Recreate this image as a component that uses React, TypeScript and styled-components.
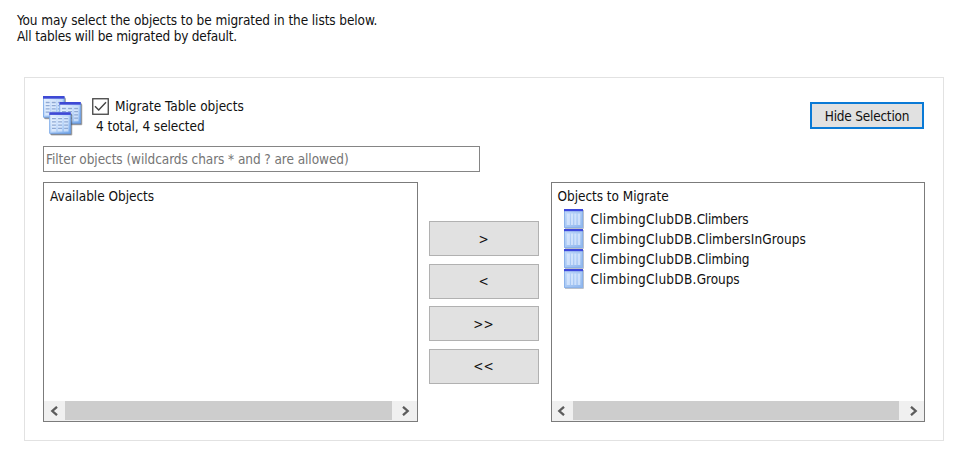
import React from 'react';
import styled, { createGlobalStyle } from 'styled-components';

const GlobalStyle = createGlobalStyle`
  *, *::before, *::after { box-sizing: border-box; }
  body { margin: 0; background: #fff; }
`;

const Page = styled.main`
  width: 977px;
  height: 455px;
  padding: 12px 33px 0 17px;
  overflow: hidden;
  color: #111;
  background: #fff;
  font: 13.5px/16px 'DejaVu Sans Condensed', 'DejaVu Sans', Tahoma, sans-serif;
  font-stretch: condensed;
`;

const Label = styled.span<{ $spacing?: number }>`
  white-space: pre;
  letter-spacing: ${p => p.$spacing ?? 0}px;
`;

const Intro = styled.header`
  display: flex;
  flex-direction: column;
  align-items: flex-start;
  height: 65px;
`;

const Panel = styled.section`
  width: 920px;
  height: 364px;
  margin-left: 7px;
  padding: 18px 18px 0;
  border: 1px solid #e2e2e2;
`;

const PanelHeader = styled.div`
  display: flex;
  align-items: flex-start;
  height: 50px;
`;

const Summary = styled.div`
  display: flex;
  flex-direction: column;
  align-items: flex-start;
  flex: 1;
  padding-left: 8px;
`;

const CheckRow = styled.label`
  display: flex;
  align-items: center;
  gap: 6px;
  height: 20px;
`;

const Totals = styled.div`
  display: flex;
  align-items: center;
  height: 20px;
  padding-left: 4px;
`;

const HideButton = styled.button`
  width: 114px;
  height: 27px;
  margin: 6px 1px 0 0;
  padding: 1px 0 0;
  border: 2px solid #0a7ad6;
  background: #e1e1e1;
  color: inherit;
  font: inherit;
`;

const Filter = styled.div`
  display: flex;
  align-items: center;
  width: 437px;
  height: 26px;
  padding: 0 2px 1px;
  border: 1px solid #858585;
  color: #757575;
`;

const Columns = styled.div`
  display: flex;
  margin-top: 10px;
`;

const ListBox = styled.div`
  display: flex;
  flex-direction: column;
  width: 375px;
  height: 240px;
  border: 1px solid #7b7b7b;
`;

const ListTitle = styled.div`
  height: 26px;
  padding: 5px 0 0 6px;
`;

const Items = styled.ul`
  flex: 1;
  margin: 0;
  padding: 0 0 0 12px;
  list-style: none;
`;

const Item = styled.li`
  display: flex;
  align-items: center;
  gap: 7px;
  height: 20px;
`;

const Scrollbar = styled.div`
  display: flex;
  height: 20px;
  padding-bottom: 1px;
  background: #f0f0f0;
`;

const ScrollArrow = styled.span<{ $end?: boolean }>`
  display: flex;
  align-items: center;
  justify-content: center;
  width: ${p => (p.$end ? 25 : 21)}px;
  padding-left: ${p => (p.$end ? 4 : 0)}px;
  padding-right: ${p => (p.$end ? 0 : 2)}px;
`;

const Thumb = styled.span`
  flex: 1;
  background: #cdcdcd;
`;

const Movers = styled.div`
  display: flex;
  flex-direction: column;
  gap: 7.5px;
  width: 133px;
  padding: 39px 12px 0 11px;
`;

const MoveButton = styled.button`
  width: 110px;
  height: 35px;
  padding: 0;
  border: 1px solid #b1b1b1;
  background: #e1e1e1;
  color: inherit;
  font: inherit;
`;

const Check = () => (
  <svg width="17" height="17" viewBox="0 0 17 17">
    <rect x=".75" y=".75" width="15.5" height="15.5" fill="#fff" stroke="#444" strokeWidth="1.3" />
    <path d="M3 8.2 6.7 12 14 4.3" fill="none" stroke="#444" strokeWidth="1.4" />
  </svg>
);

const Chevron = ({ right }: { right?: boolean }) => (
  <svg width="8" height="10" viewBox="0 0 8 10">
    <path d={right ? 'M1 .8 5.7 5 1 9.2' : 'M7 .8 2.3 5 7 9.2'} fill="none" stroke="#5c5c5c" strokeWidth="2.3" />
  </svg>
);

const Sheet = ({ x, y }: { x: number; y: number }) => (
  <g transform={`translate(${x} ${y})`}>
    <rect x="1.5" y="2" width="21.5" height="21.3" rx="1" fill="#555" opacity=".45" />
    <rect x="1" y="1" width="21.1" height="21.4" fill="#3c4c66" opacity=".65" />
    <rect width="21.5" height="21.5" fill="url(#sheet)" />
    <path d="M.4 2v19.1h20.7V2" fill="none" stroke="#6fa0e4" strokeWidth=".8" />
    <path d="M2.2 4.5h4.8v14.7H2.2zM8.3 4.5h4.8v14.7H8.3zM14.4 4.5h4.8v14.7h-4.8z" fill="#eef5ff" opacity=".6" />
    <path d="M2.7 6.5h3.9m2.2 0h3.9m2.2 0h3.9M2.7 9.7h3.9m2.2 0h3.9m2.2 0h3.9M2.7 12.9h3.9m2.2 0h3.9m2.2 0h3.9M2.7 16.1h3.9m2.2 0h3.9m2.2 0h3.9" stroke="#8fa9d3" strokeWidth="1.3" />
    <rect width="21.5" height="2.7" fill="#3e49d5" />
  </g>
);

const TablesIcon = () => (
  <svg width="41" height="40" viewBox="0 0 41 40">
    <defs>
      <linearGradient id="sheet" x1="0" y1="0" x2="1" y2="1">
        <stop offset="0" stopColor="#edf5ff" />
        <stop offset=".5" stopColor="#bcd7fa" />
        <stop offset="1" stopColor="#6fa5ea" />
      </linearGradient>
    </defs>
    <Sheet x={0} y={0} />
    <Sheet x={16.3} y={6} />
    <Sheet x={6.3} y={16.2} />
  </svg>
);

const TableIcon = () => (
  <svg width="20" height="20" viewBox="0 0 20 20">
    <defs>
      <linearGradient id="table" x1="0" y1="0" x2="1" y2="1">
        <stop offset="0" stopColor="#c3dafa" />
        <stop offset="1" stopColor="#8db6ee" />
      </linearGradient>
    </defs>
    <path d="M1 1h18.7v18.7H1z" fill="#9da7b7" />
    <path d="M0 0h19v19H0z" fill="url(#table)" />
    <path d="M2.7 4.5h3.2v11.5H2.7zM7 4.5h2.2v11.5H7zM10.3 4.5h2.2v11.5h-2.2zM13.6 4.5h2.7v11.5h-2.7z" fill="#dfecff" opacity=".7" />
    <path d="M.5 2v16.5h18V2" fill="none" stroke="#8bb2ea" />
    <path d="M0 0h19v2.2H0z" fill="#3c48dc" />
  </svg>
);

const HScroll = () => (
  <Scrollbar>
    <ScrollArrow><Chevron /></ScrollArrow>
    <Thumb />
    <ScrollArrow $end><Chevron right /></ScrollArrow>
  </Scrollbar>
);

const schema = 'ClimbingClubDB.';
const tables = [
  { name: 'Climbers', spacing: -0.25 },
  { name: 'ClimbersInGroups', spacing: 0.07 },
  { name: 'Climbing', spacing: -0.1 },
  { name: 'Groups', spacing: -0.05 },
];

export default function App() {
  return (
    <>
      <GlobalStyle />
      <Page>
        <Intro>
          <Label $spacing={-0.09}>You may select the objects to be migrated in the lists below.</Label>
          <Label $spacing={-0.19}>All tables will be migrated by default.</Label>
        </Intro>
        <Panel>
          <PanelHeader>
            <TablesIcon />
            <Summary>
              <CheckRow><Check /><Label>Migrate Table objects</Label></CheckRow>
              <Totals><Label $spacing={-0.07}>4 total, 4 selected</Label></Totals>
            </Summary>
            <HideButton><Label $spacing={-0.21}>Hide Selection</Label></HideButton>
          </PanelHeader>
          <Filter><Label $spacing={-0.07}>Filter objects (wildcards chars * and ? are allowed)</Label></Filter>
          <Columns>
            <ListBox>
              <ListTitle><Label $spacing={-0.03}>Available Objects</Label></ListTitle>
              <Items />
              <HScroll />
            </ListBox>
            <Movers>
              {['>', '<', '>>', '<<'].map(s => <MoveButton key={s}>{s}</MoveButton>)}
            </Movers>
            <ListBox>
              <ListTitle><Label $spacing={-0.05}>Objects to Migrate</Label></ListTitle>
              <Items>
                {tables.map(t => (
                  <Item key={t.name}>
                    <TableIcon />
                    <Label $spacing={0.25}>
                      {schema}
                      <Label $spacing={t.spacing}>{t.name}</Label>
                    </Label>
                  </Item>
                ))}
              </Items>
              <HScroll />
            </ListBox>
          </Columns>
        </Panel>
      </Page>
    </>
  );
}
